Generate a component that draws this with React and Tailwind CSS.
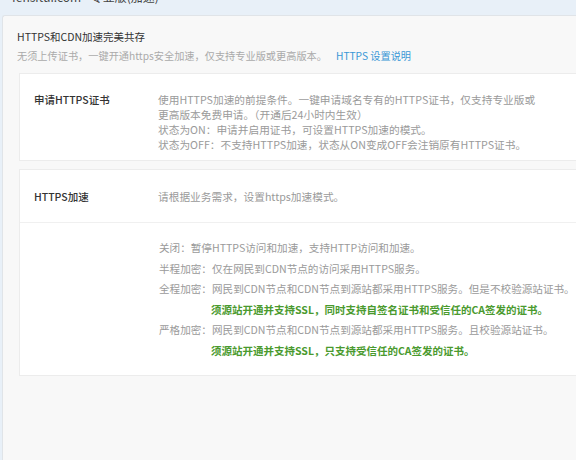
export default function App() {
  const font = "font-['Noto_Sans_CJK_SC','Noto_Sans',sans-serif]";
  const list = [
    { t: "关闭：暂停HTTPS访问和加速，支持HTTP访问和加速。" },
    { t: "半程加密：仅在网民到CDN节点的访问采用HTTPS服务。" },
    { t: "全程加密：网民到CDN节点和CDN节点到源站都采用HTTPS服务。但是不校验源站证书。" },
    { t: "须源站开通并支持SSL，同时支持自签名证书和受信任的CA签发的证书。", green: true },
    { t: "严格加密：网民到CDN节点和CDN节点到源站都采用HTTPS服务。且校验源站证书。" },
    { t: "须源站开通并支持SSL，只支持受信任的CA签发的证书。", green: true },
  ];
  return (
    <div className={`w-[576px] h-[460px] overflow-hidden bg-[#e8f0f8] ${font}`}>
      <div className="h-[15px] overflow-hidden pl-[12px]">
        <div className="-mt-[10px] text-[12px] leading-[14px] text-[#444] whitespace-nowrap">
          fensitui.com - 专业版(加速)
        </div>
      </div>
      <div className="ml-[2px] h-[445px] overflow-hidden rounded-tl-[3px] border-l border-t border-[#e0e4e8] bg-[#f8f8f8] pl-[14px] pt-[13px]">
        <div className="text-[10.5px] leading-[16px] text-[#333] whitespace-nowrap">
          HTTPS和CDN加速完美共存
        </div>
        <div className="mt-[3px] text-[10.2px] leading-[16px] text-[#aaa] whitespace-nowrap">
          无须上传证书，一键开通https安全加速，仅支持专业版或更高版本。
          <span className="ml-[9px] text-[#3a97d6]">HTTPS 设置说明</span>
        </div>

        <div className="mt-[9px] ml-[2px] flex border border-r-0 border-[#ececec] bg-white pt-[18px] pb-[8px] pl-[14px]">
          <div className="w-[124px] shrink-0 text-[10.5px] leading-[15px] font-medium text-[#333] whitespace-nowrap">
            申请HTTPS证书
          </div>
          <div className="text-[10.7px] leading-[15px] text-[#9a9a9a]">
            <div className="whitespace-nowrap">使用HTTPS加速的前提条件。一键申请域名专有的HTTPS证书，仅支持专业版或</div>
            <div className="whitespace-nowrap">更高版本免费申请。（开通后24小时内生效）</div>
            <div className="whitespace-nowrap">状态为ON：申请并启用证书，可设置HTTPS加速的模式。</div>
            <div className="whitespace-nowrap">状态为OFF：不支持HTTPS加速，状态从ON变成OFF会注销原有HTTPS证书。</div>
          </div>
        </div>

        <div className="mt-[8px] ml-[2px] border border-r-0 border-[#ececec] bg-white">
          <div className="flex pt-[19px] pb-[17px] pl-[14px] border-b border-[#f0f0f0]">
            <div className="w-[124px] shrink-0 text-[10.5px] leading-[16px] font-medium text-[#333] whitespace-nowrap">
              HTTPS加速
            </div>
            <div className="text-[10.7px] leading-[16px] text-[#9a9a9a] whitespace-nowrap">
              请根据业务需求，设置https加速模式。
            </div>
          </div>
          <div className="pl-[139px] pt-[15px] pb-[14px] text-[10.6px] leading-[20.5px]">
            {list.map((l, i) =>
              l.green ? (
                <div key={i} className="pl-[52px] text-[10.5px] font-bold text-[#4a9a2e] whitespace-nowrap">
                  {l.t}
                </div>
              ) : (
                <div key={i} className="text-[#9a9a9a] whitespace-nowrap">
                  {l.t}
                </div>
              )
            )}
          </div>
        </div>
      </div>
    </div>
  );
}
